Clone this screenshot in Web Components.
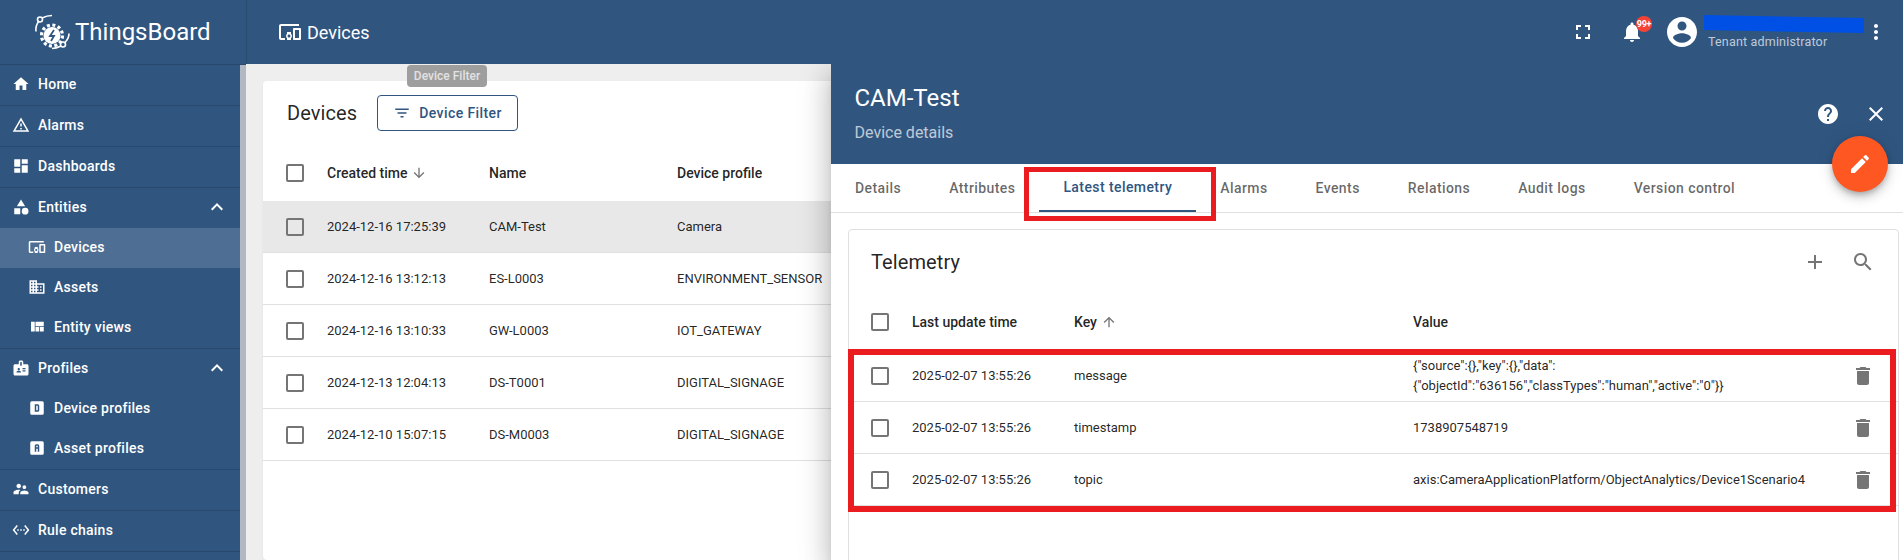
<!DOCTYPE html>
<html>
<head>
<meta charset="utf-8">
<title>Devices</title>
<style>
  html, body { margin: 0; height: 100%; overflow: hidden; }
  body { font-family: Roboto, "Noto Sans", sans-serif; color: rgba(0,0,0,.87); }
</style>
</head>
<body>
<tb-shell>
  <tb-sidebar slot="sidebar">
    <tb-nav icon="home">Home</tb-nav>
    <tb-nav icon="warning">Alarms</tb-nav>
    <tb-nav icon="dashboard">Dashboards</tb-nav>
    <tb-nav icon="category" open nodivider>Entities</tb-nav>
    <tb-nav icon="devices" sub active nodivider>Devices</tb-nav>
    <tb-nav icon="domain" sub nodivider>Assets</tb-nav>
    <tb-nav icon="quilt" sub>Entity views</tb-nav>
    <tb-nav icon="badge" open nodivider>Profiles</tb-nav>
    <tb-nav icon="boxd" sub nodivider>Device profiles</tb-nav>
    <tb-nav icon="boxa" sub>Asset profiles</tb-nav>
    <tb-nav icon="people">Customers</tb-nav>
    <tb-nav icon="ethernet">Rule chains</tb-nav>
  </tb-sidebar>

  <tb-toolbar slot="toolbar" title="Devices" role-name="Tenant administrator"></tb-toolbar>

  <tb-card slot="main" style="--cols:41px 162px 188px 1fr;--head:56px;--pad:23px">
    <span slot="title">Devices</span>
    <tb-filter-button slot="actions">Device Filter</tb-filter-button>
    <tb-row header>
      <tb-check></tb-check><tb-sort icon="down">Created time</tb-sort><span>Name</span><span>Device profile</span>
    </tb-row>
    <tb-row selected><tb-check></tb-check><span>2024-12-16 17:25:39</span><span>CAM-Test</span><span>Camera</span></tb-row>
    <tb-row><tb-check></tb-check><span>2024-12-16 13:12:13</span><span>ES-L0003</span><span>ENVIRONMENT_SENSOR</span></tb-row>
    <tb-row><tb-check></tb-check><span>2024-12-16 13:10:33</span><span>GW-L0003</span><span>IOT_GATEWAY</span></tb-row>
    <tb-row><tb-check></tb-check><span>2024-12-13 12:04:13</span><span>DS-T0001</span><span>DIGITAL_SIGNAGE</span></tb-row>
    <tb-row><tb-check></tb-check><span>2024-12-10 15:07:15</span><span>DS-M0003</span><span>DIGITAL_SIGNAGE</span></tb-row>
  </tb-card>

  <tb-drawer slot="drawer" heading="CAM-Test" subheading="Device details">
    <tb-tabs>
      <span>Details</span><span>Attributes</span><span active>Latest telemetry</span><span>Alarms</span>
      <span>Events</span><span>Relations</span><span>Audit logs</span><span>Version control</span>
    </tb-tabs>
    <tb-card bordered style="--cols:41px 162px 339px 1fr 47px;--head:56px;--pad:22px">
      <span slot="title">Telemetry</span>
      <tb-icon slot="tools" name="add" size="24" style="color:#757575"></tb-icon>
      <tb-icon slot="tools" name="search" size="24" style="color:#757575"></tb-icon>
      <tb-row header>
        <tb-check></tb-check><span>Last update time</span><tb-sort icon="up">Key</tb-sort><span>Value</span><span></span>
      </tb-row>
      <tb-row><tb-check></tb-check><span>2025-02-07 13:55:26</span><span>message</span><span>{"source":{},"key":{},"data":<br>{"objectId":"636156","classTypes":"human","active":"0"}}</span><tb-icon name="delete" size="24" style="color:#757575"></tb-icon></tb-row>
      <tb-row><tb-check></tb-check><span>2025-02-07 13:55:26</span><span>timestamp</span><span>1738907548719</span><tb-icon name="delete" size="24" style="color:#757575"></tb-icon></tb-row>
      <tb-row><tb-check></tb-check><span>2025-02-07 13:55:26</span><span>topic</span><span>axis:CameraApplicationPlatform/ObjectAnalytics/Device1Scenario4</span><tb-icon name="delete" size="24" style="color:#757575"></tb-icon></tb-row>
    </tb-card>
  </tb-drawer>

  <tb-tooltip slot="overlay">Device Filter</tb-tooltip>
</tb-shell>

<script>
const ICONS = {
  home: 'M10 20v-6h4v6h5v-8h3L12 3 2 12h3v8z',
  warning: 'M12 5.99L19.53 19H4.47L12 5.99M12 2L1 21h22L12 2zm1 14h-2v2h2v-2zm0-6h-2v4h2v-4z',
  dashboard: 'M3 13h8V3H3v10zm0 8h8v-6H3v6zm10 0h8V11h-8v10zm0-18v6h8V3h-8z',
  category: 'M12 2l-5.5 9h11zM17.5 13a4.5 4.5 0 1 0 0 9 4.5 4.5 0 0 0 0-9zM3 13.5h8v8H3z',
  devices: 'M3 6h18V4H3c-1.1 0-2 .9-2 2v12c0 1.1.9 2 2 2h4v-2H3V6zm10 6H9v1.78c-.61.55-1 1.33-1 2.22s.39 1.67 1 2.22V20h4v-1.78c.61-.55 1-1.34 1-2.22s-.39-1.67-1-2.22V12zm-2 5.5c-.83 0-1.5-.67-1.5-1.5s.67-1.5 1.5-1.5 1.5.67 1.5 1.5-.67 1.5-1.5 1.5zM22 8h-6c-.5 0-1 .5-1 1v10c0 .5.5 1 1 1h6c.5 0 1-.5 1-1V9c0-.5-.5-1-1-1zm-1 10h-4v-8h4v8z',
  domain: 'M12 7V3H2v18h20V7H12zM6 19H4v-2h2v2zm0-4H4v-2h2v2zm0-4H4V9h2v2zm0-4H4V5h2v2zm4 12H8v-2h2v2zm0-4H8v-2h2v2zm0-4H8V9h2v2zm0-4H8V5h2v2zm10 12h-8v-2h2v-2h-2v-2h2v-2h-2V9h8v10zm-2-8h-2v2h2v-2zm0 4h-2v2h2v-2z',
  quilt: 'M10 18h5v-6h-5v6zm-6 0h5V5H4v13zm12 0h5v-6h-5v6zM10 5v6h11V5H10z',
  badge: 'M20 7h-5V4c0-1.1-.9-2-2-2h-2c-1.1 0-2 .9-2 2v3H4c-1.1 0-2 .9-2 2v11c0 1.1.9 2 2 2h16c1.1 0 2-.9 2-2V9c0-1.1-.9-2-2-2zM9 12c.83 0 1.5.67 1.5 1.5S9.83 15 9 15s-1.5-.67-1.5-1.5S8.17 12 9 12zm3 6H6v-.75c0-1 2-1.5 3-1.5s3 .5 3 1.5V18zm1-9h-2V4h2v5zm5 7.5h-4V15h4v1.5zm0-3h-4V12h4v1.5z',
  boxd: 'M9 7h4a2 2 0 0 1 2 2v6a2 2 0 0 1-2 2H9V7m2 2v6h2V9h-2M5 3h14a2 2 0 0 1 2 2v14a2 2 0 0 1-2 2H5a2 2 0 0 1-2-2V5a2 2 0 0 1 2-2z',
  boxa: 'M11 7a2 2 0 0 0-2 2v8h2v-4h2v4h2V9a2 2 0 0 0-2-2h-2m0 2h2v2h-2V9M5 3h14a2 2 0 0 1 2 2v14a2 2 0 0 1-2 2H5a2 2 0 0 1-2-2V5a2 2 0 0 1 2-2z',
  people: 'M16.5 12c1.38 0 2.49-1.12 2.49-2.5S17.88 7 16.5 7C15.12 7 14 8.12 14 9.5s1.12 2.5 2.5 2.5zM9 11c1.66 0 2.99-1.34 2.99-3S10.66 5 9 5C7.34 5 6 6.34 6 8s1.34 3 3 3zm7.5 3c-1.83 0-5.5.92-5.5 2.75V19h11v-2.25c0-1.83-3.67-2.75-5.5-2.75zM9 13c-2.33 0-7 1.17-7 3.5V19h7v-2.25c0-.85.33-2.34 2.37-3.47C10.5 13.1 9.66 13 9 13z',
  ethernet: 'M7.77 6.76L6.23 5.48.82 12l5.41 6.52 1.54-1.28L3.42 12l4.35-5.24zM7 13h2v-2H7v2zm10-2h-2v2h2v-2zm-6 2h2v-2h-2v2zm6.77-7.52l-1.54 1.28L20.58 12l-4.35 5.24 1.54 1.28L23.18 12l-5.41-6.52z',
  less: 'M12 8l-6 6 1.41 1.41L12 10.83l4.59 4.58L18 14z',
  fullscreen: 'M7 14H5v5h5v-2H7v-3zm-2-4h2V7h3V5H5v5zm12 7h-3v2h5v-5h-2v3zM14 5v2h3v3h2V5h-5z',
  bell: 'M12 22c1.1 0 2-.9 2-2h-4c0 1.1.89 2 2 2zm6-6v-5c0-3.07-1.64-5.64-4.5-6.32V4c0-.83-.67-1.5-1.5-1.5s-1.5.67-1.5 1.5v.68C7.63 5.36 6 7.92 6 11v5l-2 2v1h16v-1l-2-2z',
  account: 'M12 2C6.48 2 2 6.48 2 12s4.48 10 10 10 10-4.48 10-10S17.52 2 12 2zm0 3c1.66 0 3 1.34 3 3s-1.34 3-3 3-3-1.34-3-3 1.34-3 3-3zm0 14.2c-2.5 0-4.71-1.28-6-3.22.03-1.99 4-3.08 6-3.08 1.99 0 5.97 1.09 6 3.08-1.29 1.94-3.5 3.22-6 3.22z',
  more: 'M12 8c1.1 0 2-.9 2-2s-.9-2-2-2-2 .9-2 2 .9 2 2 2zm0 2c-1.1 0-2 .9-2 2s.9 2 2 2 2-.9 2-2-.9-2-2-2zm0 6c-1.1 0-2 .9-2 2s.9 2 2 2 2-.9 2-2-.9-2-2-2z',
  help: 'M12 2C6.48 2 2 6.48 2 12s4.48 10 10 10 10-4.48 10-10S17.52 2 12 2zm1 17h-2v-2h2v2zm2.07-7.75l-.9.92C13.45 12.9 13 13.5 13 15h-2v-.5c0-1.1.45-2.1 1.17-2.83l1.24-1.26c.37-.36.59-.86.59-1.41 0-1.1-.9-2-2-2s-2 .9-2 2H8c0-2.21 1.79-4 4-4s4 1.79 4 4c0 .88-.36 1.68-.93 2.25z',
  close: 'M19 6.41L17.59 5 12 10.59 6.41 5 5 6.41 10.59 12 5 17.59 6.41 19 12 13.41 17.59 19 19 17.59 13.41 12z',
  edit: 'M3 17.25V21h3.75L17.81 9.94l-3.75-3.75L3 17.25zM20.71 7.04c.39-.39.39-1.02 0-1.41l-2.34-2.34c-.39-.39-1.02-.39-1.41 0l-1.83 1.83 3.75 3.75 1.83-1.83z',
  filter: 'M10 18h4v-2h-4v2zM3 6v2h18V6H3zm3 7h12v-2H6v2z',
  down: 'M20 12l-1.41-1.41L13 16.17V4h-2v12.17l-5.58-5.59L4 12l8 8 8-8z',
  up: 'M4 12l1.41 1.41L11 7.83V20h2V7.83l5.58 5.59L20 12l-8-8-8 8z',
  add: 'M19 13h-6v6h-2v-6H5v-2h6V5h2v6h6v2z',
  search: 'M15.5 14h-.79l-.28-.27C15.41 12.59 16 11.11 16 9.5 16 5.91 13.09 3 9.5 3S3 5.91 3 9.5 5.91 16 9.5 16c1.61 0 3.09-.59 4.23-1.57l.27.28v.79l5 4.99L20.49 19l-4.99-5zm-6 0C7.01 14 5 11.99 5 9.5S7.01 5 9.5 5 14 7.01 14 9.5 11.99 14 9.5 14z',
  delete: 'M6 19c0 1.1.9 2 2 2h8c1.1 0 2-.9 2-2V7H6v12zM19 4h-3.5l-1-1h-5l-1 1H5v2h14V4z'
};

class TbElement extends HTMLElement {
  connectedCallback() {
    if (this.shadowRoot) return;
    this.attachShadow({ mode: 'open' });
    this.shadowRoot.innerHTML = this.render();
  }
}

class TbIcon extends TbElement {
  render() {
    const size = this.getAttribute('size') || 24;
    return `<style>:host{display:block;width:${size}px;height:${size}px;flex:none;color:inherit}svg{display:block;fill:currentColor}</style>
      <svg width="${size}" height="${size}" viewBox="0 0 24 24"><path fill-rule="evenodd" d="${ICONS[this.getAttribute('name')]}"/></svg>`;
  }
}

class TbShell extends TbElement {
  render() {
    return `<style>
      :host{display:grid;grid-template-columns:246px 1fr;grid-template-rows:64px 1fr;height:560px;position:relative;overflow:hidden;background:#eee}
      .side{grid-row:1 / 3;position:relative;z-index:3}
      .top{position:relative;z-index:3}
      .main{padding:17px 0 0 17px;min-width:0;overflow:hidden}
      .drawer{position:absolute;left:831px;right:0;top:64px;bottom:0;z-index:2}
      .drawer ::slotted(*){height:100%}
    </style>
    <div class="side"><slot name="sidebar"></slot></div>
    <div class="top"><slot name="toolbar"></slot></div>
    <div class="main"><slot name="main"></slot></div>
    <div class="drawer"><slot name="drawer"></slot></div>
    <slot name="overlay"></slot>`;
  }
}

class TbSidebar extends TbElement {
  render() {
    return `<style>
      :host{display:flex;flex-direction:column;height:560px;background:#305680;color:#fff}
      .logo{height:64px;flex:none;display:flex;align-items:center;gap:4px;padding-left:33px;border-bottom:1px solid rgba(0,0,0,.15);font-size:24px}
      .logo svg{flex:none;margin-top:1px}
      .body{flex:1;display:flex;min-height:0}
      nav{flex:1;min-width:0}
      .bar{width:6px;background:#b1b7c3}
    </style>
    <div class="logo">
      <svg width="38" height="40" viewBox="0 0 38 40" fill="none" stroke="#fff" stroke-width="1.6">
        <circle cx="19" cy="22.500" r="10.500" stroke-width="3.200" stroke-dasharray="3 2.500"/>
        <circle cx="19" cy="22.500" r="8.500" fill="#fff" stroke="none"/>
        <path d="M21 17l-4 6h4l-3 5" stroke="#305680" stroke-width="1.800"/>
        <path d="M3 18.500c-.5-4 1-8 3-10.500M9 5c3-1.500 6-2.500 10-2.500M36 20.500c0 3.500-2 7-4.500 9.500M28 33c-3 1.500-6 2.500-9 2.500"/>
        <circle cx="7" cy="6.500" r="2.500"/><circle cx="30" cy="31.500" r="2.500"/>
      </svg>
      <span>ThingsBoard</span>
    </div>
    <div class="body"><nav><slot></slot></nav><div class="bar"></div></div>`;
  }
}

class TbNav extends TbElement {
  render() {
    const sub = this.hasAttribute('sub');
    const divider = !this.hasAttribute('nodivider');
    return `<style>
      :host{display:flex;align-items:center;height:38px;gap:8px;padding:0 11px 2px ${sub ? 28 : 12}px;
        font-size:14px;font-weight:500;letter-spacing:.25px;color:#fff;
        ${divider ? 'border-bottom:1px solid rgba(0,0,0,.15);' : ''}
        ${this.hasAttribute('active') ? 'background:rgba(255,255,255,.15);' : ''}}
      .label{flex:1}
    </style>
    <tb-icon name="${this.getAttribute('icon')}" size="18"></tb-icon>
    <span class="label"><slot></slot></span>
    ${this.hasAttribute('open') ? '<tb-icon name="less" size="24"></tb-icon>' : ''}`;
  }
}

class TbToolbar extends TbElement {
  render() {
    return `<style>
      :host{display:flex;align-items:center;height:64px;background:#305680;color:#fff;border-left:1px solid rgba(0,0,0,.12);padding-left:31px;padding-right:15px}
      .title{display:flex;align-items:center;gap:5px;font-size:18px;flex:1}
      .btn{width:40px;height:40px;display:flex;align-items:center;justify-content:center;position:relative}
      .bell{margin:0 12px 0 9px}
      .badge{position:absolute;left:24px;top:4px;width:16px;height:16px;border-radius:50%;background:#f44336;font-size:9px;font-weight:700;line-height:16px;text-align:center;letter-spacing:-.2px}
      .user{width:160px;margin-left:4px;display:flex;flex-direction:column;align-self:flex-start;padding-top:15px}
      .redact{height:18px;background:#0050e6;clip-path:polygon(0 0,100% 3px,100% 100%,0 15px)}
      .role{margin:1px 0 0 4px;font-size:12.500px;line-height:16px;color:rgba(255,255,255,.7);white-space:nowrap;letter-spacing:.18px}
    </style>
    <div class="title"><tb-icon name="devices" size="24"></tb-icon><span>${this.getAttribute('title')}</span></div>
    <div class="btn"><tb-icon name="fullscreen" size="24"></tb-icon></div>
    <div class="btn bell"><tb-icon name="bell" size="24"></tb-icon><span class="badge">99+</span></div>
    <tb-icon name="account" size="36"></tb-icon>
    <div class="user"><div class="redact"></div><div class="role">${this.getAttribute('role-name')}</div></div>
    <tb-icon name="more" size="24"></tb-icon>`;
  }
}

class TbCard extends TbElement {
  render() {
    const bordered = this.hasAttribute('bordered');
    return `<style>
      :host{display:block;background:#fff;border-radius:4px;box-sizing:border-box;
        ${bordered ? 'border:1px solid #e0e0e0;margin:16px 4px 0 17px;height:calc(100% - 50px);' : 'height:479px;width:1500px;box-shadow:0 1px 2px rgba(0,0,0,.08);'}}
      .head{display:flex;align-items:center;height:64px;padding:0 ${bordered ? 22 : 24}px 0 ${bordered ? 22 : 24}px;gap:${bordered ? 0 : 20}px}
      .title{font-size:20px;letter-spacing:.1px}
      .tools{margin-left:auto;display:flex;gap:24px;margin-right:1px}
    </style>
    <div class="head">
      <div class="title"><slot name="title"></slot></div>
      <slot name="actions"></slot>
      <div class="tools"><slot name="tools"></slot></div>
    </div>
    <slot></slot>`;
  }
}

class TbFilterButton extends TbElement {
  render() {
    return `<style>
      :host{display:flex;align-items:center;gap:8px;height:36px;box-sizing:border-box;padding:0 15px 0 14px;border:1px solid #305680;border-radius:4px;color:#305680;font-size:14px;font-weight:500;letter-spacing:.4px}
      tb-icon{margin-left:1px}
    </style>
    <tb-icon name="filter" size="18"></tb-icon><span><slot></slot></span>`;
  }
}

class TbRow extends TbElement {
  render() {
    const header = this.hasAttribute('header');
    return `<style>
      :host{display:grid;grid-template-columns:var(--cols);align-items:center;box-sizing:border-box;
        height:${header ? 'var(--head)' : '52px'};padding-left:var(--pad);line-height:20px;
        font-size:${header ? 14 : 13}px;color:rgba(0,0,0,.87);
        ${header ? 'font-weight:500;' : 'border-bottom:1px solid #e0e0e0;'}
        ${this.hasAttribute('selected') ? 'background:#e8e8e8;' : ''}}
    </style><slot></slot>`;
  }
}

class TbCheck extends TbElement {
  render() {
    return `<style>:host{display:block;width:18px;height:18px;box-sizing:border-box;border:2px solid #757575;border-radius:2px}</style>`;
  }
}

class TbSort extends TbElement {
  render() {
    return `<style>:host{display:flex;align-items:center;gap:4px}tb-icon{color:#757575}</style>
      <span><slot></slot></span><tb-icon name="${this.getAttribute('icon')}" size="16"></tb-icon>`;
  }
}

class TbDrawer extends TbElement {
  render() {
    return `<style>
      :host{display:block;position:relative;background:#fff;box-shadow:0 8px 10px -5px rgba(0,0,0,.2),0 16px 24px 2px rgba(0,0,0,.14),0 6px 30px 5px rgba(0,0,0,.12)}
      header{height:100px;box-sizing:border-box;background:#305680;color:#fff;padding:16px 24px 0 23.500px;position:relative}
      h1{margin:0;font-size:24px;font-weight:400;line-height:36px}
      p{margin:7px 0 0;font-size:16px;line-height:20px;color:rgba(255,255,255,.7)}
      .acts{position:absolute;top:38px;right:15px;display:flex;gap:24px}
      .fab{position:absolute;left:1001px;top:72px;width:56px;height:56px;border-radius:50%;background:#ff5722;color:#fff;display:flex;align-items:center;justify-content:center;z-index:2;
        box-shadow:0 3px 5px -1px rgba(0,0,0,.2),0 6px 10px 0 rgba(0,0,0,.14),0 1px 18px 0 rgba(0,0,0,.12)}
      .mark{position:absolute;box-sizing:border-box;border:solid #ea1c1f;z-index:1;pointer-events:none}
      .mark.tab{left:193px;top:103px;width:192px;height:54px;border-width:5px}
      .mark.rows{left:17px;top:285px;width:1048px;height:163px;border-width:6px}
    </style>
    <header>
      <h1>${this.getAttribute('heading')}</h1>
      <p>${this.getAttribute('subheading')}</p>
      <div class="acts"><tb-icon name="help" size="24"></tb-icon><tb-icon name="close" size="24"></tb-icon></div>
    </header>
    <div class="fab"><tb-icon name="edit" size="24"></tb-icon></div>
    <slot></slot>
    <div class="mark tab"></div>
    <div class="mark rows"></div>`;
  }
}

class TbTabs extends TbElement {
  render() {
    return `<style>
      :host{display:flex;height:49px!important;box-sizing:border-box;border-bottom:1px solid #e0e0e0;font-size:14px;font-weight:500;letter-spacing:.42px;color:rgba(0,0,0,.6)}
      ::slotted(span){display:flex;align-items:center;padding:0 24px;height:48px;box-sizing:border-box;white-space:nowrap}
      ::slotted(span[active]){color:#305680;border-bottom:2px solid #305680}
    </style><slot></slot>`;
  }
}

class TbTooltip extends TbElement {
  render() {
    return `<style>
      :host{position:absolute;left:407px;top:65px;width:80px;height:22px;display:flex;align-items:center;justify-content:center;background:#9e9e9e;border-radius:4px;color:#e2e2e2;font-size:12px;font-weight:500;z-index:1}
    </style><slot></slot>`;
  }
}

customElements.define('tb-icon', TbIcon);
customElements.define('tb-shell', TbShell);
customElements.define('tb-sidebar', TbSidebar);
customElements.define('tb-nav', TbNav);
customElements.define('tb-toolbar', TbToolbar);
customElements.define('tb-card', TbCard);
customElements.define('tb-filter-button', TbFilterButton);
customElements.define('tb-row', TbRow);
customElements.define('tb-check', TbCheck);
customElements.define('tb-sort', TbSort);
customElements.define('tb-drawer', TbDrawer);
customElements.define('tb-tabs', TbTabs);
customElements.define('tb-tooltip', TbTooltip);
</script>
</body>
</html>
